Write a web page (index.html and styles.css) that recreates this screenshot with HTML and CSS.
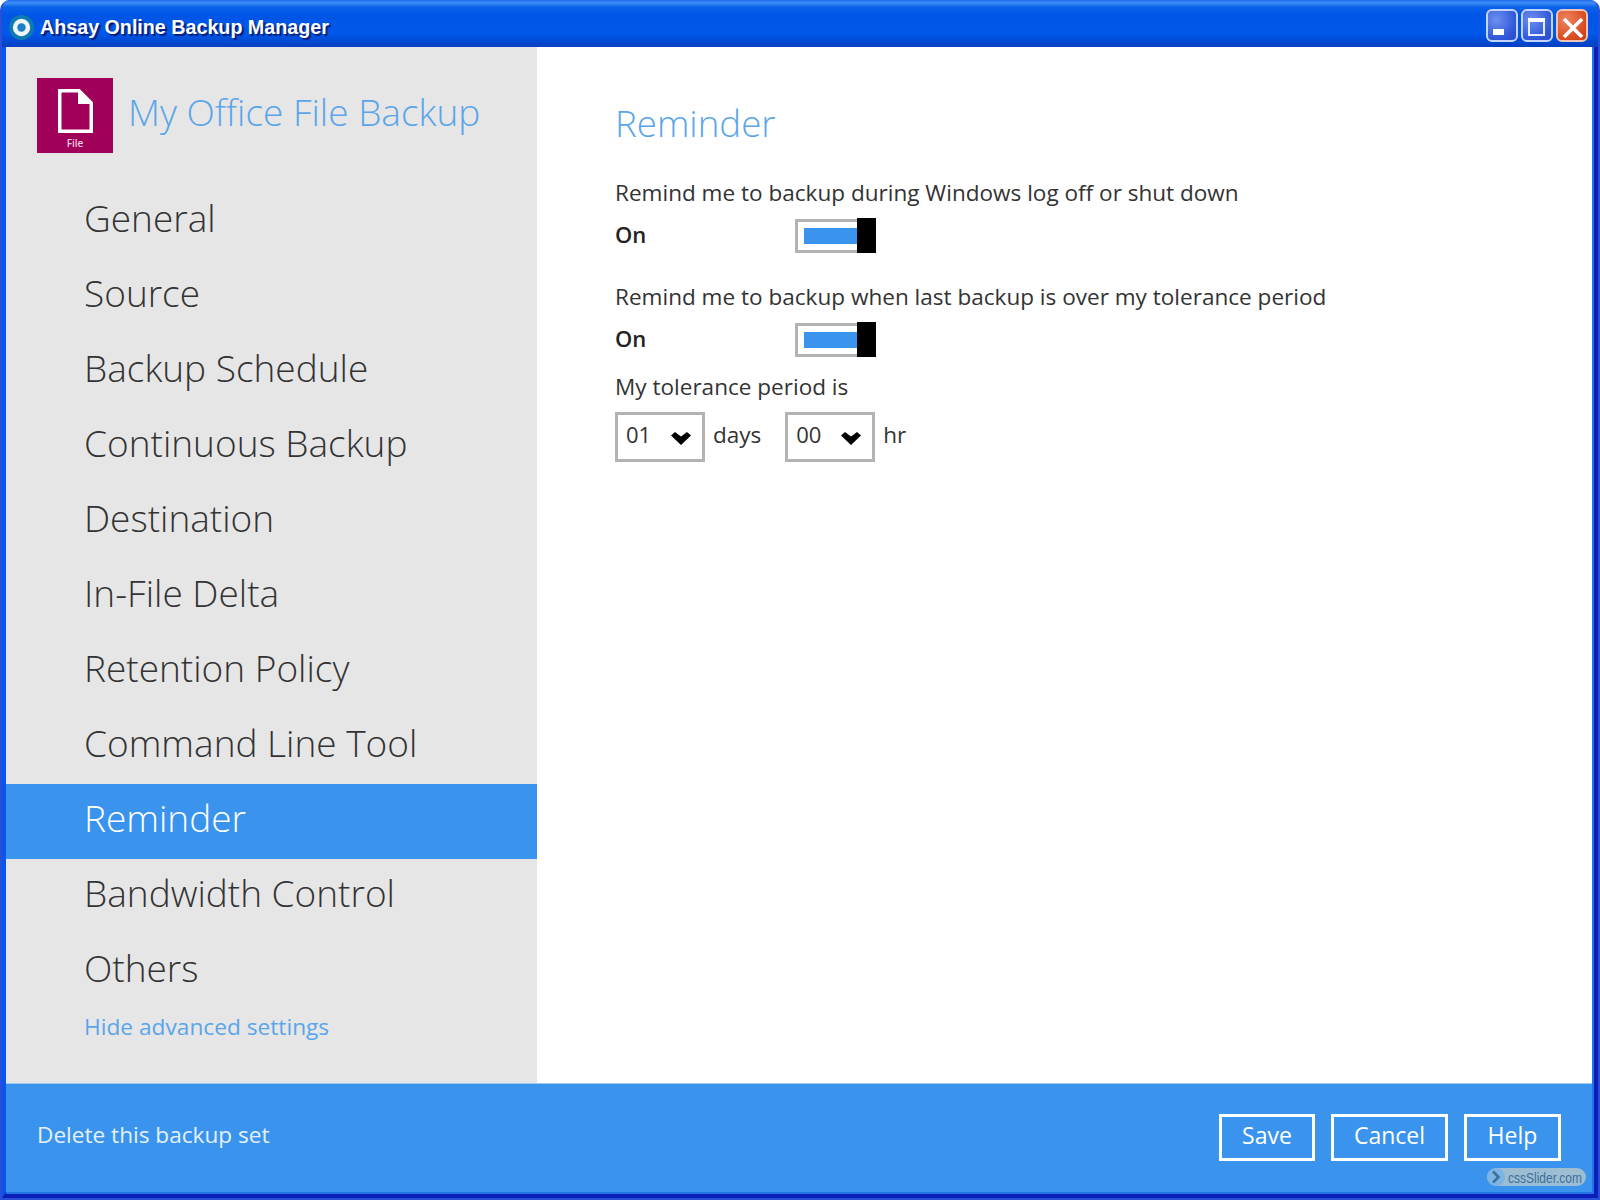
FILE: index.html
```html
<!DOCTYPE html>
<html lang="en">
<head>
<meta charset="utf-8">
<title>Ahsay Online Backup Manager</title>
<link rel="stylesheet" href="styles.css">
</head>
<body>
<div class="window">
  <header class="titlebar">
    <div class="title-left">
      <svg class="app-icon" width="25" height="25" viewBox="0 0 26 26"><circle cx="13" cy="13" r="13" fill="#0f7ab0"/><circle cx="13" cy="13" r="9" fill="#eef6fb"/><circle cx="13" cy="13" r="4.4" fill="#1a7fc6"/></svg>
      <span class="title-text">Ahsay Online Backup Manager</span>
    </div>
    <div class="win-buttons">
      <div class="win-btn"><svg width="28" height="29" viewBox="2 2 28 29"><rect x="7" y="20" width="11" height="6" fill="#fff"/></svg></div>
      <div class="win-btn"><svg width="28" height="29" viewBox="2 2 28 29"><rect x="8" y="10" width="15" height="16" fill="none" stroke="#e4edfb" stroke-width="2"/><rect x="7" y="9" width="17" height="4" fill="#fff"/></svg></div>
      <div class="win-btn close"><svg width="28" height="29" viewBox="2 2 28 29"><path d="M8 10L26 28M26 10L8 28" stroke="#fff" stroke-width="3.6" fill="none"/></svg></div>
    </div>
  </header>
  <div class="client">
    <div class="inner">
      <div class="body">
        <aside class="sidebar">
          <div class="brand">
            <div class="logo">
              <svg width="35" height="44" viewBox="0 0 35 44"><path d="M1.75 1.75H21L33.25 14V42.25H1.75Z" fill="none" stroke="#fff" stroke-width="3.5"/><path d="M20 1L34 15H20Z" fill="#fff"/></svg>
              <span class="logo-label">File</span>
            </div>
            <span class="brand-name">My Office File Backup</span>
          </div>
          <nav class="nav">
            <a class="nav-item">General</a>
            <a class="nav-item">Source</a>
            <a class="nav-item">Backup Schedule</a>
            <a class="nav-item">Continuous Backup</a>
            <a class="nav-item">Destination</a>
            <a class="nav-item">In-File Delta</a>
            <a class="nav-item">Retention Policy</a>
            <a class="nav-item">Command Line Tool</a>
            <a class="nav-item active">Reminder</a>
            <a class="nav-item">Bandwidth Control</a>
            <a class="nav-item">Others</a>
          </nav>
          <a class="advanced">Hide advanced settings</a>
        </aside>
        <main class="content">
          <h1 class="heading">Reminder</h1>
          <p class="label first">Remind me to backup during Windows log off or shut down</p>
          <div class="toggle-row">
            <span class="state">On</span>
            <div class="toggle"><span class="toggle-fill"></span><span class="toggle-knob"></span></div>
          </div>
          <p class="label second">Remind me to backup when last backup is over my tolerance period</p>
          <div class="toggle-row lower">
            <span class="state">On</span>
            <div class="toggle"><span class="toggle-fill"></span><span class="toggle-knob"></span></div>
          </div>
          <p class="label third">My tolerance period is</p>
          <div class="period">
            <div class="select"><span>01</span><svg width="20" height="13" viewBox="0 0 20 13"><path d="M0 3.5L4 0L10 4.5L16 0L20 3.5L10 13Z" fill="#000"/></svg></div>
            <span class="unit">days</span>
            <div class="select"><span>00</span><svg width="20" height="13" viewBox="0 0 20 13"><path d="M0 3.5L4 0L10 4.5L16 0L20 3.5L10 13Z" fill="#000"/></svg></div>
            <span class="unit">hr</span>
          </div>
        </main>
      </div>
      <footer class="footer">
        <a class="delete">Delete this backup set</a>
        <div class="actions">
          <button class="btn save">Save</button>
          <button class="btn cancel">Cancel</button>
          <button class="btn help">Help</button>
        </div>
        <div class="watermark"><span class="wm-arrow"><svg width="10" height="14" viewBox="0 0 10 14"><path d="M2 1.5L7.5 7L2 12.5" fill="none" stroke="#3f6f9c" stroke-width="2.6"/></svg></span><span class="wm-text">cssSlider.com</span></div>
      </footer>
    </div>
  </div>
</div>
</body>
</html>
```
FILE: styles.css
```css
* { box-sizing: border-box; }
html, body { margin: 0; padding: 0; }
body { width: 1600px; height: 1200px; overflow: hidden; background: #fff; font-family: "Open Sans", sans-serif; }
.window { width: 1600px; height: 1200px; display: flex; flex-direction: column; border: solid #2a4fd6; border-width: 0 2px 2px 2px; border-radius: 10px 10px 0 0; overflow: hidden; background: #0a55ec; }
.titlebar { height: 47px; flex: none; display: flex; justify-content: space-between; align-items: flex-start; background: linear-gradient(#1f6cf0 0, #3f8ff5 3px, #0a62ea 7px, #0055e5 16px, #0058ea 34px, #0048d0 42px, #0a3fc0 47px); }
.title-left { display: flex; align-items: center; gap: 6px; padding: 14px 0 0 7px; }
.app-icon { display: block; }
.title-text { font-family: "Liberation Sans", sans-serif; font-weight: 700; font-size: 19.7px; line-height: 25px; padding-top: 1px; color: #fff; text-shadow: 2px 2px 1px #0a1c78; }
.win-buttons { display: flex; gap: 3px; padding: 9px 10px 0 0; }
.win-btn { width: 32px; height: 33px; border: 2px solid #c4d4f6; border-radius: 6px; background: radial-gradient(circle at 30% 30%, #6d8ff0, #2f57d8 70%, #2a4ac8); }
.win-btn svg { display: block; }
.win-btn.close { background: radial-gradient(circle at 30% 30%, #ee8560, #d8491f 70%, #c23a12); border-color: #f0c4b0; }
.client { flex: 1; display: flex; min-height: 0; border: solid #0a1fb8; border-width: 0 6px 6px 0; border-left: 4px solid #0a55ec; }
.inner { flex: 1; display: flex; flex-direction: column; min-width: 0; box-shadow: 2px 0 0 #2474e8, 0 2px 0 #2474e8, 2px 2px 0 #2474e8; }
.body { flex: 1; display: flex; min-height: 0; }
.sidebar { width: 531px; flex: none; background: #e6e6e6; display: flex; flex-direction: column; }
.brand { height: 137px; flex: none; display: flex; align-items: flex-start; padding: 31px 0 0 31px; gap: 16px; }
.logo { width: 76px; height: 75px; background: #a0005a; display: flex; flex-direction: column; align-items: center; padding-top: 11px; }
.logo svg { display: block; }
.logo-label { color: #f2cfe0; font-size: 10px; font-weight: 600; line-height: 14px; margin-top: 3px; }
.brand-name { font-weight: 300; font-size: 37px; line-height: 50px; color: #5aa5ea; margin-top: 9px; margin-left: -1px; }
.nav { display: flex; flex-direction: column; }
.nav-item { height: 75px; padding-left: 78px; font-weight: 300; font-size: 37px; line-height: 68px; color: #333; }
.nav-item.active { background: #3a94ee; color: #fff; }
.advanced { padding: 3px 0 0 78px; font-size: 22.7px; line-height: 30px; color: #5aa5ea; }
.content { flex: 1; background: #fff; padding: 49px 0 0 78px; }
.heading { margin: 0; font-weight: 300; font-size: 36.7px; line-height: 54px; color: #5aa5ea; }
.label { margin: 0; font-size: 22.55px; line-height: 30px; color: #333; }
.label.first { margin-top: 28px; }
.label.second { margin-top: 29px; }
.label.third { margin-top: 15px; }
.toggle-row { display: flex; align-items: center; margin-top: 11px; height: 34px; }
.toggle-row.lower { margin-top: 11px; }
.state { width: 180px; font-size: 22px; font-weight: 600; color: #222; margin-bottom: 5px; }
.toggle { width: 81px; height: 34px; border: 3px solid #b3b3b3; border-right: none; display: flex; align-items: center; padding-left: 6px; position: relative; }
.toggle-fill { width: 54px; height: 16px; background: #3a94ee; }
.toggle-knob { position: absolute; right: 0; top: -4px; width: 19px; height: 35px; background: #000; }
.period { display: flex; align-items: center; margin-top: 10px; }
.select { width: 90px; height: 50px; border: 3px solid #b3b3b3; display: flex; align-items: center; justify-content: space-between; padding: 0 11px 6px 8px; font-size: 22px; color: #333; }
.select svg { margin-top: 8px; }
.unit { font-size: 22.5px; color: #333; margin: 0 24px 0 8px; padding-bottom: 6px; }
.footer { height: 109px; flex: none; background: #3a94ee; border-top: 1px solid #9cc8f2; display: flex; justify-content: space-between; align-items: flex-start; padding: 30px 31px 0 31px; position: relative; }
.delete { font-size: 22.6px; line-height: 42px; color: #e4f0fb; }
.actions { display: flex; gap: 16px; }
.btn { height: 47px; border: 3px solid #fff; background: transparent; color: #fff; font-family: "Open Sans", sans-serif; font-size: 23px; line-height: 36px; padding: 0 0 6px; }
.save { width: 96px; }
.cancel { width: 117px; }
.help { width: 97px; }
.watermark { position: absolute; right: 6px; bottom: 6px; width: 99px; height: 18px; border-radius: 9px; background: #9cbdd2; display: flex; align-items: center; overflow: hidden; }
.wm-arrow { width: 18px; height: 18px; border-radius: 9px; background: #7db4e6; display: flex; align-items: center; justify-content: center; flex: none; }
.wm-text { font-family: "Liberation Sans", sans-serif; font-size: 15px; color: #3f6f9c; margin-left: 3px; white-space: nowrap; transform: scaleX(.8); transform-origin: left center; }
```
